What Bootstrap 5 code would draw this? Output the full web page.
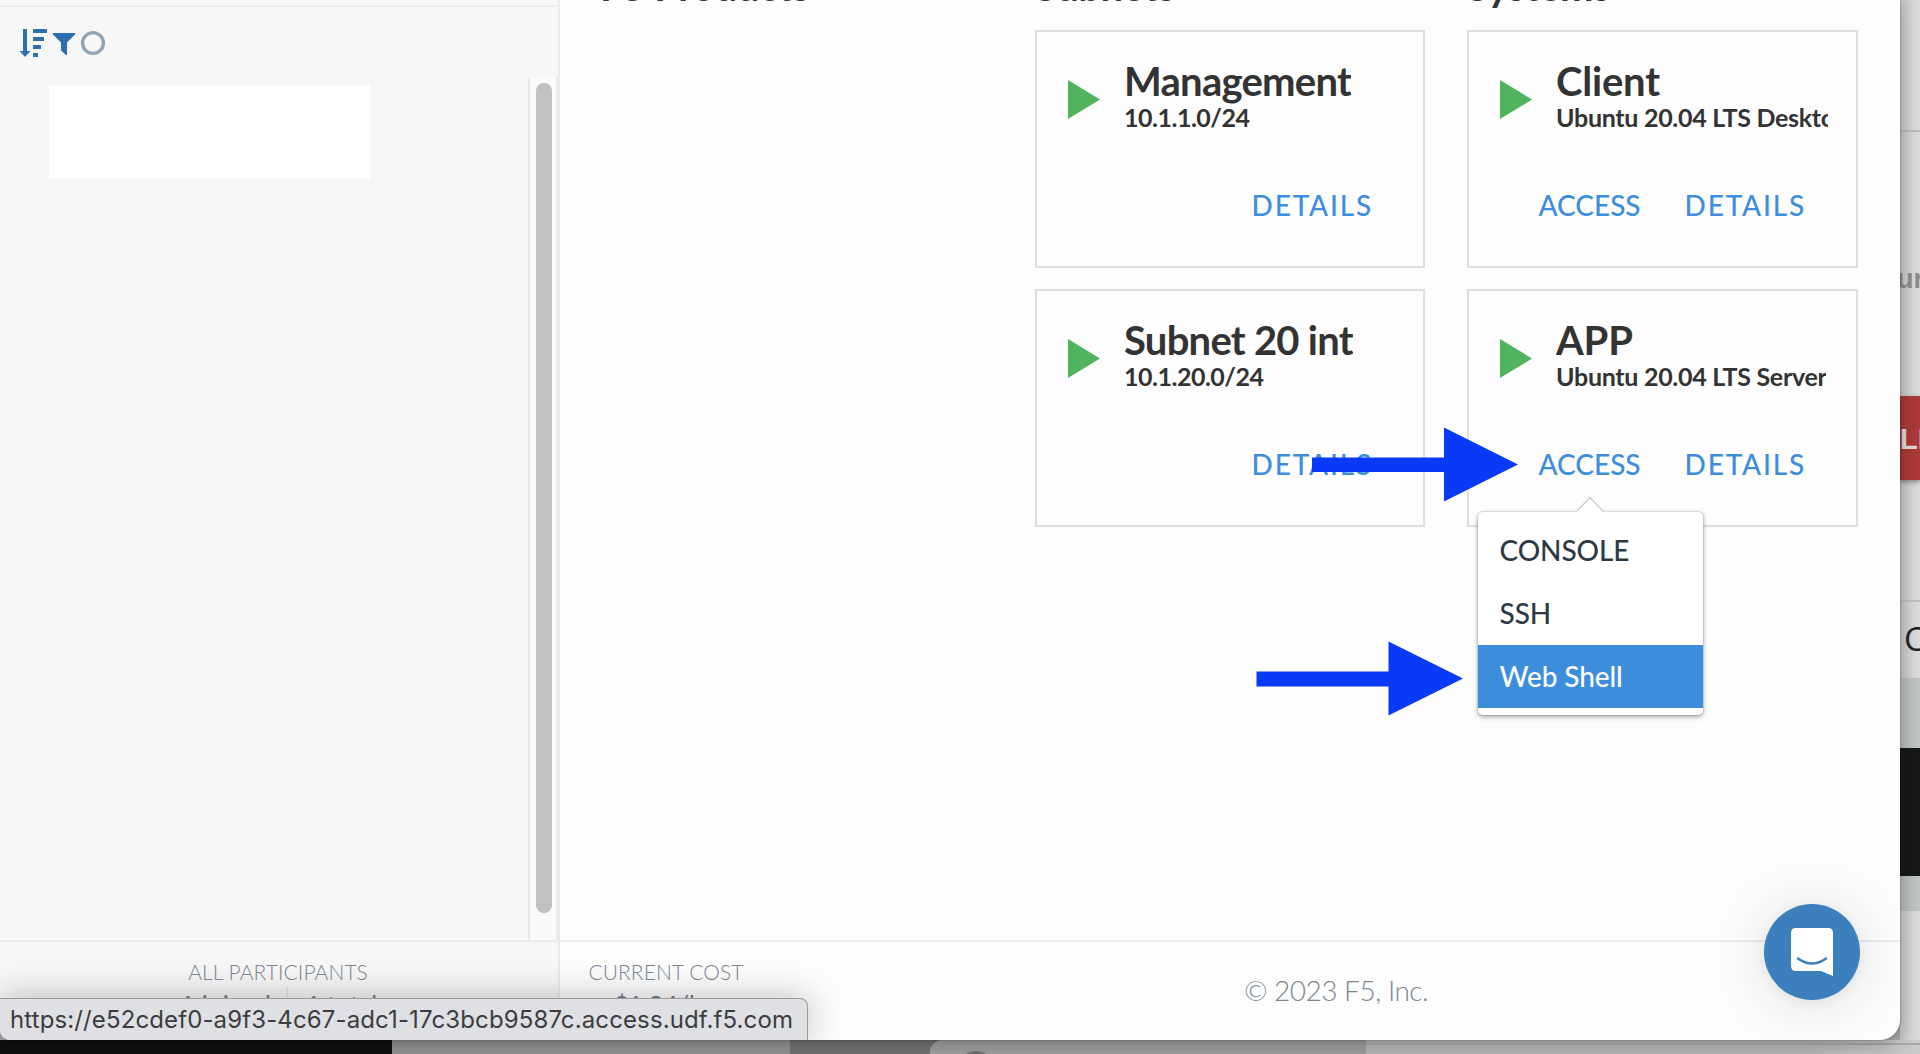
<!DOCTYPE html>
<html lang="en">
<head>
<meta charset="utf-8">
<title>UDF Deployment</title>
<meta name="viewport" content="width=device-width, initial-scale=1">
<link href="https://cdn.jsdelivr.net/npm/bootstrap@5.3.0/dist/css/bootstrap.min.css" rel="stylesheet">
<style>
  body { font-family: Lato, sans-serif; color: #333; background: #a9a9a9; }
  .desk { width: 1920px; height: 1054px; }
  .top-part { height: 1040px; }

  /* browser window */
  .app-window { width: 1900px; z-index: 2; background: #fdfdfd; border-radius: 0 0 20px 10px; box-shadow: 0 0 2px rgba(0,0,0,.4), 0 4px 16px rgba(0,0,0,.25); }
  .side { width: 560px; background: #f7f7f7; border-right: 2px solid #ebebeb; border-radius: 0 0 0 10px; }
  .side-top { height: 7px; border-bottom: 2px solid #ebebeb; }
  .side-tools { height: 70px; padding: 21px 0 0 19px; }
  .side-list { padding: 8px 0 0 49px; }
  .blank-item { width: 321px; height: 94px; background: #fff; }
  .track { width: 30px; background: #fafafa; border-left: 2px solid #e8e8e8; border-right: 2px solid #ebebeb; padding: 6px 4px 27px 6px; }
  .thumb { width: 16px; background: #c1c1c1; border-radius: 8px; }
  .foot { height: 100px; border-top: 2px solid #ebebeb; color: #87939d; }
  .foot-label { font-size: 21px; font-weight: 300; line-height: 26px; padding-top: 17px; letter-spacing: .08px; color: #7b8893; }
  .side .foot-label { padding-right: 2px; }
  .foot-value { font-size: 25px; line-height: 30px; color: #6f7f8d; padding-top: 4px; }
  .joined { width: 286px; padding-right: 15px; letter-spacing: .3px; }
  .total { border-left: 2px solid #e6e6e6; padding-left: 18px; margin-top: 1px; padding-top: 3px; }
  .cost { width: 212px; }
  .cost .foot-value { padding-right: 6px; }
  .copyright { font-size: 28px; font-weight: 300; letter-spacing: -.5px; line-height: 34px; padding-top: 31px; color: #7b8893; }

  /* resource columns */
  .board { gap: 41px; padding-left: 43px; margin-top: -34px; }
  .board-col { width: 391px; }
  .subnets { padding-right: 1px; }
  .board-title { font-size: 40px; font-weight: 700; line-height: 40px; margin: 0 0 24px; letter-spacing: -.45px; white-space: nowrap; }
  .first-title { margin-left: -3px; }
  .res { height: 238px; border: 2px solid #dedede; margin-bottom: 21px; }
  .res-head { padding: 28px 28px 0 31px; gap: 24px; }
  .play { width: 32px; height: 39px; margin-top: 20px; flex: none; }
  .res-name { font-size: 40px; font-weight: 700; line-height: 40px; letter-spacing: -.2px; white-space: nowrap; margin: 0; padding-top: 1px; }
  .tight { letter-spacing: -.75px; }
  .res-sub { font-size: 25px; font-weight: 700; line-height: 32px; letter-spacing: -.3px; white-space: nowrap; overflow: hidden; }
  .res-sub.num { letter-spacing: -.5px; }
  .res-acts { gap: 44px; padding: 55px 50px 0 0; }
  .act { font-size: 28px; line-height: 34px; color: #3d8ddd; text-decoration: none; font-weight: 500; }
  .act.wide { letter-spacing: 1.8px; }

  /* access menu */
  .access-menu { display: block; top: 65px; left: -61px; width: 225px; height: 203px; padding: 7px 0; border: 0; border-radius: 5px; background: #fff; box-shadow: 0 0 1px 1px rgba(40,50,60,.12), 0 2px 5px rgba(0,0,0,.35); z-index: 5; }
  .access-menu .dropdown-item { height: 63px; line-height: 62px; padding: 0 22px; font-size: 28px; font-weight: 500; color: #2d3a45; letter-spacing: -.1px; }
  .access-menu .dropdown-item.active { background: #3d8ddd; color: #fff; }
  .caret-up { top: -16px; left: 98px; }

  /* overlays */
  .arrow { z-index: 6; }
  .status { left: 0; bottom: 0; width: 808px; height: 42px; background: #dfe0e4; border: 1px solid #9b9b9d; border-left: 0; border-bottom: 0; border-radius: 0 8px 0 8px; box-shadow: 0 0 36px rgba(0,0,0,.27); font: 24px/42px Inter, sans-serif; letter-spacing: .12px; color: #3c3d40; padding-left: 10px; white-space: nowrap; z-index: 7; }
  .clip-box { border-radius: 0 0 20px 10px; z-index: 3; pointer-events: none; }
  .chat { width: 96px; height: 96px; left: 1764px; top: 904px; background: #3b80bd; box-shadow: 0 2px 12px rgba(0,0,0,.06), 0 4px 60px rgba(0,0,0,.13); }

  /* what shows beside and under the window */
  .strip { width: 20px; background: linear-gradient(90deg, #c4c4c4, #dcdcdc); }
  .strip > div { white-space: nowrap; flex: none; }
  .s1 { height: 396px; }
  .s1-line { height: 130px; border-bottom: 2px solid #b9b9b9; box-sizing: content-box; }
  .s1-text { font: 700 27px/32px "Liberation Sans", sans-serif; color: #8a8a8a; margin: 131px 0 0 -3px; }
  .s2 { height: 84px; background: linear-gradient(90deg, #a63636, #ac3939); color: #dcd6d6; font: 700 29px/86px "Liberation Sans", sans-serif; overflow: hidden; box-shadow: 0 2px 5px rgba(0,0,0,.4); }
  .s3 { height: 198px; }
  .s3-line { height: 122px; border-bottom: 2px solid #bebebe; }
  .s3-text { font: 33px/74px "Open Sans", sans-serif; color: #222; padding-left: 4px; }
  .s4 { height: 70px; background: linear-gradient(90deg, #b3b7b6, #c1c4c3); }
  .s5 { height: 128px; background: #171819; }
  .s6 { height: 35px; background: linear-gradient(90deg, #b3b7b6, #c1c4c3); }
  .under { height: 14px; }
  .u1 { width: 392px; background: #0f1010; }
  .u2 { width: 398px; background: #8f9291; }
  .u3 { width: 140px; background: #707271; }
  .u4 { width: 436px; background: #9a9d9c; border-radius: 12px 0 0 0; }
  .u3-wrap { background: #707271; }
  .u5 { width: 554px; background: linear-gradient(90deg, #b5b5b5 80%, #cacaca); padding-top: 3px; }
  .u5-line { height: 2px; background: #a8a8a8; }
</style>
</head>
<body>
<div class="desk overflow-hidden position-relative">
  <div class="top-part d-flex">
    <main class="app-window position-relative d-flex flex-shrink-0">
      <aside class="side d-flex flex-column flex-shrink-0">
        <div class="side-top"></div>
        <div class="side-tools">
          <svg class="d-block" width="90" height="30" viewBox="19 28 90 30" fill="#2c70b0">
            <path d="M23 29h4v22h3.500L25 57l-5.500-6H23z"/>
            <path d="M33 29h14v4H33zM33 37h11v4H33zM33 45h8v4h-8zM33 53h5v4h-5z"/>
            <path d="M53 33h22v1.500L67 42.500V55h-1L61 50.500v-8L53 34.500z"/>
            <circle cx="93" cy="43" r="10.400" fill="none" stroke="#8fa4b6" stroke-width="3.400"/>
          </svg>
        </div>
        <div class="d-flex flex-grow-1">
          <div class="side-list flex-grow-1"><div class="blank-item"></div></div>
          <div class="track d-flex"><div class="thumb"></div></div>
        </div>
        <div class="foot">
          <div class="foot-label text-center">ALL PARTICIPANTS</div>
          <div class="d-flex">
            <div class="foot-value joined text-end">1 joined</div>
            <div class="foot-value total">1 total</div>
          </div>
        </div>
      </aside>

      <section class="d-flex flex-column flex-grow-1">
        <div class="board d-flex flex-grow-1">
          <div class="board-col"><h2 class="board-title first-title">F5 Products</h2></div>
          <div class="board-col subnets">
            <h2 class="board-title">Subnets</h2>
            <article class="res">
              <div class="res-head d-flex">
                <svg class="play" viewBox="0 0 32 39"><path d="M0 0L32 19.500L0 39z" fill="#52b35f"/></svg>
                <div class="overflow-hidden">
                  <h3 class="res-name tight">Management</h3>
                  <div class="res-sub num">10.1.1.0/24</div>
                </div>
              </div>
              <div class="res-acts d-flex justify-content-end"><a class="act wide" href="#">DETAILS</a></div>
            </article>
            <article class="res">
              <div class="res-head d-flex">
                <svg class="play" viewBox="0 0 32 39"><path d="M0 0L32 19.500L0 39z" fill="#52b35f"/></svg>
                <div class="overflow-hidden">
                  <h3 class="res-name tight">Subnet 20 int</h3>
                  <div class="res-sub num">10.1.20.0/24</div>
                </div>
              </div>
              <div class="res-acts d-flex justify-content-end"><a class="act wide" href="#">DETAILS</a></div>
            </article>
          </div>
          <div class="board-col">
            <h2 class="board-title">Systems</h2>
            <article class="res">
              <div class="res-head d-flex">
                <svg class="play" viewBox="0 0 32 39"><path d="M0 0L32 19.500L0 39z" fill="#52b35f"/></svg>
                <div class="overflow-hidden">
                  <h3 class="res-name">Client</h3>
                  <div class="res-sub">Ubuntu 20.04 LTS Desktop</div>
                </div>
              </div>
              <div class="res-acts d-flex justify-content-end"><a class="act" href="#">ACCESS</a><a class="act wide" href="#">DETAILS</a></div>
            </article>
            <article class="res">
              <div class="res-head d-flex">
                <svg class="play" viewBox="0 0 32 39"><path d="M0 0L32 19.500L0 39z" fill="#52b35f"/></svg>
                <div class="overflow-hidden">
                  <h3 class="res-name">APP</h3>
                  <div class="res-sub">Ubuntu 20.04 LTS Server</div>
                </div>
              </div>
              <div class="res-acts d-flex justify-content-end">
                <div class="dropdown act">
                  <a class="act" href="#">ACCESS</a>
                  <div class="dropdown-menu access-menu">
                    <svg class="caret-up position-absolute" width="28" height="18" viewBox="0 0 28 18"><path d="M0 16L14 1.500L28 16V18H0z" fill="#fff"/><path d="M.5 15.500L14 1.500L27.500 15.500" fill="none" stroke="#c9cdd1" stroke-width="1.400"/></svg>
                    <a class="dropdown-item" href="#">CONSOLE</a>
                    <a class="dropdown-item" href="#">SSH</a>
                    <a class="dropdown-item active" href="#">Web Shell</a>
                  </div>
                </div>
                <a class="act wide" href="#">DETAILS</a>
              </div>
            </article>
          </div>
        </div>
        <div class="foot d-flex">
          <div class="cost text-center">
            <div class="foot-label">CURRENT COST</div>
            <div class="foot-value">$1.84/hr</div>
          </div>
          <div class="copyright flex-grow-1 text-center">© 2023 F5, Inc.</div>
        </div>
      </section>

      <svg class="arrow position-absolute" style="left:1312px;top:427px" width="207" height="75"><path d="M0 30.500H132V.5L206 37.500L132 74.500V45H0z" fill="#083af8"/></svg>
      <svg class="arrow position-absolute" style="left:1256px;top:641px" width="208" height="75"><path d="M.5 30.500H132.500V.5L207 37.500L132.500 74.500V45.500H.5z" fill="#083af8"/></svg>

      <div class="clip-box position-absolute top-0 start-0 w-100 h-100 overflow-hidden">
        <div class="chat position-absolute rounded-circle">
          <svg width="96" height="96" viewBox="0 0 96 96"><path d="M32 24h32q5 0 5 5v43L57 67H32q-5 0-5-5V29q0-5 5-5z" fill="#fff"/><path d="M34 54.500q14 10 28 0" fill="none" stroke="#3b80bd" stroke-width="2.600" stroke-linecap="round"/></svg>
        </div>
        <div class="status position-absolute">https://e52cdef0-a9f3-4c67-adc1-17c3bcb9587c.access.udf.f5.com</div>
      </div>
    </main>
    <div class="strip d-flex flex-column flex-shrink-0">
      <div class="s1"><div class="s1-line"></div><div class="s1-text">ur</div></div>
      <div class="s2">LE</div>
      <div class="s3"><div class="s3-line"></div><div class="s3-text">C</div></div>
      <div class="s4"></div>
      <div class="s5"></div>
      <div class="s6"></div>
    </div>
  </div>
  <div class="under d-flex">
    <div class="u1"></div>
    <div class="u2"></div>
    <div class="u3"></div>
    <div class="u3-wrap"><div class="u4 h-100"><svg class="d-block" width="436" height="14"><circle cx="46" cy="31" r="20" fill="#6e7170"/></svg></div></div>
    <div class="u5"><div class="u5-line"></div></div>
  </div>
</div>
<script src="https://cdn.jsdelivr.net/npm/bootstrap@5.3.0/dist/js/bootstrap.bundle.min.js"></script>
</body>
</html>
